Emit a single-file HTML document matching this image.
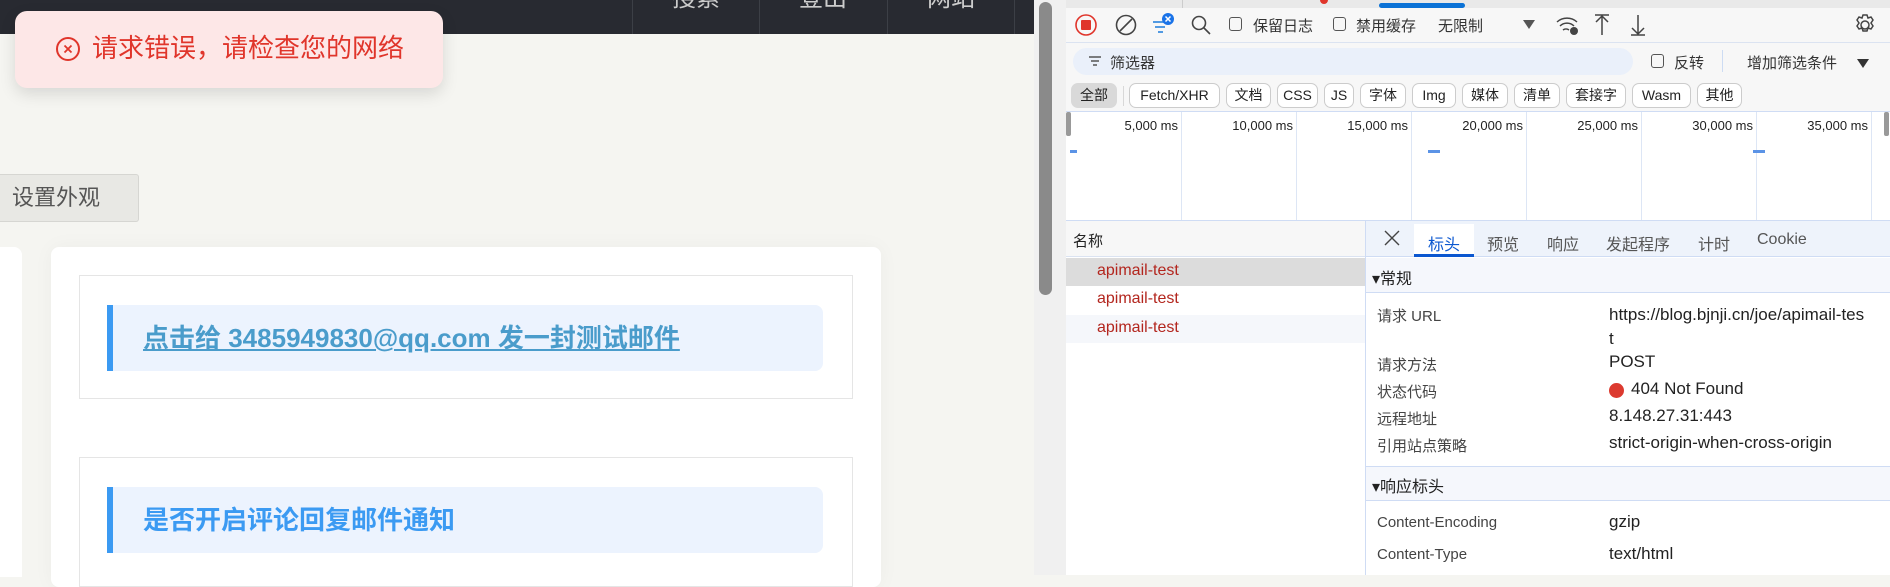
<!DOCTYPE html>
<html><head><meta charset="utf-8"><style>
*{margin:0;padding:0;box-sizing:border-box}
body{width:1890px;height:575px;overflow:hidden;position:relative;background:#f5f5f1;font-family:"Liberation Sans","Noto Sans CJK SC",sans-serif}
.a{position:absolute}
.nav{color:#ccc;font-size:24px;top:-16px;line-height:30px;width:126px;text-align:center}
.sep{width:1px;height:34px;top:0;background:#3c3f46}
.dt{font-size:15px;color:#333;white-space:nowrap}
.chip{position:absolute;top:83px;height:25px;border:1px solid #ccc;border-radius:7px;font-size:14px;line-height:23px;text-align:center;color:#222;background:#fff}
.tm{position:absolute;top:118px;font-size:13px;color:#222;text-align:right;width:110px}
.gl{position:absolute;top:112px;width:1px;height:108px;background:#dde6f5}
.lab{position:absolute;left:1377px;font-size:15px;color:#444}
.val{position:absolute;left:1609px;font-size:17px;color:#222}
</style></head><body>
<div class="a" style="left:0;top:0;width:1034px;height:34px;background:#282a31"></div>
<div class="a sep" style="left:632px"></div><div class="a sep" style="left:759px"></div><div class="a sep" style="left:887px"></div><div class="a sep" style="left:1014px"></div>
<div class="a nav" style="left:633px">搜索</div>
<div class="a nav" style="left:760px">登出</div>
<div class="a nav" style="left:888px">网站</div>
<div class="a" style="left:1034px;top:0;width:32px;height:575px;background:#f0f0f0"></div>
<div class="a" style="left:1039px;top:2px;width:13px;height:293px;background:#8a8a8a;border-radius:7px"></div>

<div class="a" style="left:0;top:174px;width:139px;height:48px;background:#e8e8e4;border:1px solid #d6d6d2;border-left:none;border-radius:0 3px 3px 0;font-size:22px;line-height:46px;color:#555;padding-left:12px">设置外观</div>
<div class="a" style="left:0;top:247px;width:22px;height:330px;background:#fff;border-radius:0 8px 0 0"></div>
<div class="a" style="left:51px;top:247px;width:830px;height:340px;background:#fff;border-radius:8px;box-shadow:0 0 20px rgba(0,0,0,.04)"></div>
<div class="a" style="left:79px;top:275px;width:774px;height:124px;border:1px solid #e5e5e5"></div>
<div class="a" style="left:107px;top:305px;width:716px;height:66px;background:#ecf3fe;border-left:6px solid #3b9af2;border-radius:0 8px 8px 0"></div>
<div class="a" style="left:143px;top:321px;font-size:26px;font-weight:bold;color:#4a9ccb;text-decoration:underline;white-space:nowrap;line-height:34px">点击给 3485949830@qq.com 发一封测试邮件</div>
<div class="a" style="left:79px;top:457px;width:774px;height:130px;border:1px solid #e5e5e5"></div>
<div class="a" style="left:107px;top:487px;width:716px;height:66px;background:#ecf3fe;border-left:6px solid #3b9af2;border-radius:0 8px 8px 0"></div>
<div class="a" style="left:143px;top:503px;font-size:26px;font-weight:bold;color:#3b9af2;white-space:nowrap;line-height:34px">是否开启评论回复邮件通知</div>

<div class="a" style="left:15px;top:11px;width:428px;height:77px;background:#fde7e7;border-radius:12px;box-shadow:0 6px 16px rgba(0,0,0,.12)"></div>
<svg class="a" style="left:55px;top:36px" width="26" height="26" viewBox="0 0 26 26"><circle cx="13" cy="13" r="11" fill="none" stroke="#e0352b" stroke-width="2"/><path d="M9.5 9.5l7 7M16.5 9.5l-7 7" stroke="#e0352b" stroke-width="1.8"/></svg>
<div class="a" style="left:92px;top:31px;font-size:26px;line-height:34px;color:#e0352b;white-space:nowrap">请求错误，请检查您的网络</div>

<div class="a" style="left:1066px;top:0;width:824px;height:575px;background:#fff"></div>
<div class="a" style="left:1066px;top:0;width:824px;height:8px;background:#e9e9e9"></div>
<div class="a" style="left:1182px;top:0;width:1px;height:8px;background:#ccc"></div>
<div class="a" style="left:1320px;top:-4px;width:8px;height:8px;border-radius:50%;background:#e0352b"></div>
<div class="a" style="left:1379px;top:3px;width:86px;height:5px;background:#0b72d6;border-radius:3px"></div>
<div class="a" style="left:1066px;top:8px;width:824px;height:35px;background:#f7f7f7;border-bottom:1px solid #dbe3f1"></div>
<svg class="a" style="left:1074px;top:13px" width="24" height="24"><circle cx="12" cy="12" r="10" fill="none" stroke="#e0352b" stroke-width="1.6"/><rect x="7" y="7" width="10" height="10" rx="1" fill="#e0352b"/></svg>
<svg class="a" style="left:1114px;top:13px" width="24" height="24"><circle cx="12" cy="12" r="9.5" fill="none" stroke="#444" stroke-width="1.6"/><path d="M6 18L18 6" stroke="#444" stroke-width="1.6"/></svg>
<svg class="a" style="left:1150px;top:12px" width="26" height="24"><path d="M3 10h14M5 15h10M8 20h5" stroke="#3b8de0" stroke-width="1.8"/><circle cx="18" cy="7" r="6" fill="#1a73e8"/><path d="M15.5 4.5l5 5M20.5 4.5l-5 5" stroke="#fff" stroke-width="1.5"/></svg>
<svg class="a" style="left:1190px;top:14px" width="22" height="22"><circle cx="9" cy="9" r="6.5" fill="none" stroke="#444" stroke-width="1.6"/><path d="M14 14l6 6" stroke="#444" stroke-width="1.6"/></svg>
<div class="a" style="left:1229px;top:17px;width:13px;height:14px;border:1.3px solid #555;border-radius:3px"></div>
<div class="a dt" style="left:1253px;top:15px">保留日志</div>
<div class="a" style="left:1333px;top:17px;width:13px;height:14px;border:1.3px solid #555;border-radius:3px"></div>
<div class="a dt" style="left:1356px;top:15px">禁用缓存</div>
<div class="a dt" style="left:1438px;top:15px">无限制</div>
<div class="a" style="left:1523px;top:20px;border-left:6px solid transparent;border-right:6px solid transparent;border-top:9px solid #555"></div>
<svg class="a" style="left:1555px;top:13px" width="26" height="24"><path d="M2 9a15 15 0 0 1 20 0M5 13a10 10 0 0 1 14 0M8 17a5 5 0 0 1 6 0" fill="none" stroke="#444" stroke-width="1.5"/><circle cx="19" cy="18" r="4" fill="#444"/></svg>
<svg class="a" style="left:1592px;top:13px" width="20" height="24"><path d="M3 2h14M10 3v19M4 9l6-6 6 6" fill="none" stroke="#444" stroke-width="1.5"/></svg>
<svg class="a" style="left:1628px;top:13px" width="20" height="24"><path d="M3 22h14M10 2v19M4 15l6 6 6-6" fill="none" stroke="#444" stroke-width="1.5"/></svg>
<svg class="a" style="left:1853px;top:13px" width="24" height="24"><circle cx="12" cy="12" r="4" fill="none" stroke="#444" stroke-width="1.5"/><path d="M10 2h4l1 3 3-1 2 3-2 3 2 3-2 3-3-1-1 3h-4l-1-3-3 1-2-3 2-3-2-3 2-3 3 1z" fill="none" stroke="#444" stroke-width="1.5"/></svg>

<div class="a" style="left:1066px;top:43px;width:824px;height:35px;background:#f7f7f7"></div>
<div class="a" style="left:1073px;top:48px;width:560px;height:27px;background:#eaf0fa;border-radius:14px"></div>
<svg class="a" style="left:1087px;top:54px" width="16" height="14"><path d="M2 3h12M4 7h8M6 11h4" stroke="#555" stroke-width="1.5"/></svg>
<div class="a dt" style="left:1110px;top:52px">筛选器</div>
<div class="a" style="left:1651px;top:54px;width:13px;height:14px;border:1.3px solid #555;border-radius:3px"></div>
<div class="a dt" style="left:1674px;top:52px">反转</div>
<div class="a" style="left:1722px;top:50px;width:1px;height:22px;background:#cddcf3"></div>
<div class="a dt" style="left:1747px;top:52px">增加筛选条件</div>
<div class="a" style="left:1857px;top:59px;border-left:6px solid transparent;border-right:6px solid transparent;border-top:9px solid #333"></div>

<div class="a" style="left:1066px;top:78px;width:824px;height:34px;background:#f7f7f7;border-bottom:1px solid #cfdcf4"></div>
<div class="chip" style="left:1071px;width:46px;background:#d9d9d9;border-color:#d9d9d9">全部</div>
<div class="a" style="left:1123px;top:86px;width:1px;height:20px;background:#d8d8d8"></div>
<div class="chip" style="left:1129px;width:91px">Fetch/XHR</div>
<div class="chip" style="left:1226px;width:45px">文档</div>
<div class="chip" style="left:1277px;width:41px">CSS</div>
<div class="chip" style="left:1324px;width:30px">JS</div>
<div class="chip" style="left:1360px;width:46px">字体</div>
<div class="chip" style="left:1412px;width:44px">Img</div>
<div class="chip" style="left:1462px;width:46px">媒体</div>
<div class="chip" style="left:1514px;width:46px">清单</div>
<div class="chip" style="left:1566px;width:60px">套接字</div>
<div class="chip" style="left:1632px;width:59px">Wasm</div>
<div class="chip" style="left:1697px;width:45px">其他</div>

<div class="a" style="left:1066px;top:112px;width:5px;height:24px;background:#999;border-radius:2px"></div>
<div class="a" style="left:1884px;top:112px;width:5px;height:24px;background:#999;border-radius:2px"></div>
<div class="gl" style="left:1181px"></div><div class="gl" style="left:1296px"></div><div class="gl" style="left:1411px"></div><div class="gl" style="left:1526px"></div><div class="gl" style="left:1641px"></div><div class="gl" style="left:1756px"></div><div class="gl" style="left:1871px"></div>
<div class="tm" style="left:1068px">5,000 ms</div><div class="tm" style="left:1183px">10,000 ms</div><div class="tm" style="left:1298px">15,000 ms</div><div class="tm" style="left:1413px">20,000 ms</div><div class="tm" style="left:1528px">25,000 ms</div><div class="tm" style="left:1643px">30,000 ms</div><div class="tm" style="left:1758px">35,000 ms</div>
<div class="a" style="left:1070px;top:150px;width:7px;height:3px;background:#5b93e6"></div>
<div class="a" style="left:1428px;top:150px;width:12px;height:3px;background:#5b93e6"></div>
<div class="a" style="left:1753px;top:150px;width:12px;height:3px;background:#5b93e6"></div>
<div class="a" style="left:1066px;top:220px;width:824px;height:1px;background:#cfdcf4"></div>

<div class="a" style="left:1066px;top:221px;width:299px;height:36px;background:#f7f7f7;border-bottom:1px solid #dbe3f1"></div>
<div class="a dt" style="left:1073px;top:230px;color:#222">名称</div>
<div class="a" style="left:1066px;top:258px;width:299px;height:28px;background:#dcdcdc"></div>
<div class="a" style="left:1066px;top:315px;width:299px;height:28px;background:#f5f7fb"></div>
<div class="a" style="left:1097px;top:262px;font-size:16px;color:#b3261e">apimail-test</div>
<div class="a" style="left:1097px;top:290px;font-size:16px;color:#b3261e">apimail-test</div>
<div class="a" style="left:1097px;top:319px;font-size:16px;color:#b3261e">apimail-test</div>
<div class="a" style="left:1365px;top:221px;width:1px;height:354px;background:#cfdcf4"></div>

<div class="a" style="left:1366px;top:221px;width:524px;height:36px;background:#eef3fb;border-bottom:1px solid #cfdcf4"></div>
<svg class="a" style="left:1383px;top:229px" width="18" height="18"><path d="M2 2l14 14M16 2L2 16" stroke="#444" stroke-width="1.4"/></svg>
<div class="a" style="left:1414px;top:224px;width:60px;height:33px;background:#fff;border-bottom:3px solid #0b57d0"></div>
<div class="a" style="left:1428px;top:231px;font-size:16px;color:#0b57d0">标头</div>
<div class="a" style="left:1487px;top:231px;font-size:16px;color:#555">预览</div>
<div class="a" style="left:1547px;top:231px;font-size:16px;color:#555">响应</div>
<div class="a" style="left:1606px;top:231px;font-size:16px;color:#555">发起程序</div>
<div class="a" style="left:1698px;top:231px;font-size:16px;color:#555">计时</div>
<div class="a" style="left:1757px;top:231px;font-size:16px;color:#555">Cookie</div>

<div class="a" style="left:1366px;top:258px;width:524px;height:35px;background:#f5f7fc;border-bottom:1px solid #cfdcf4"></div>
<div class="a" style="left:1372px;top:265px;font-size:16px;color:#222">▾常规</div>
<div class="lab" style="top:305px">请求 URL</div>
<div class="val" style="top:303px;line-height:24px;white-space:nowrap">https://blog.bjnji.cn/joe/apimail-tes<br>t</div>
<div class="lab" style="top:354px">请求方法</div><div class="val" style="top:352px">POST</div>
<div class="lab" style="top:381px">状态代码</div>
<div class="a" style="left:1609px;top:383px;width:15px;height:15px;border-radius:50%;background:#dc3a2f"></div>
<div class="val" style="left:1631px;top:379px">404 Not Found</div>
<div class="lab" style="top:408px">远程地址</div><div class="val" style="top:406px">8.148.27.31:443</div>
<div class="lab" style="top:435px">引用站点策略</div><div class="val" style="top:433px">strict-origin-when-cross-origin</div>
<div class="a" style="left:1366px;top:466px;width:524px;height:35px;background:#f5f7fc;border-top:1px solid #cfdcf4;border-bottom:1px solid #cfdcf4"></div>
<div class="a" style="left:1372px;top:473px;font-size:16px;color:#222">▾响应标头</div>
<div class="lab" style="top:514px">Content-Encoding</div><div class="val" style="top:512px">gzip</div>
<div class="lab" style="top:546px">Content-Type</div><div class="val" style="top:544px">text/html</div>
</body></html>
